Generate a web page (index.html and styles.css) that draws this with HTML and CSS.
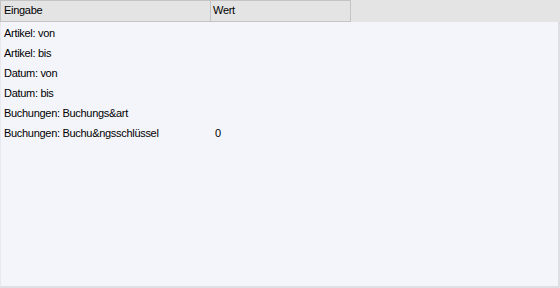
FILE: index.html
```html
<!DOCTYPE html>
<html lang="de">
<head>
  <meta charset="UTF-8">
  <title>Eingaben</title>
  <link rel="stylesheet" href="styles.css">
</head>
<body>
  <div class="grid">
    <div class="head">
      <div class="hcell col1">Eingabe</div>
      <div class="hcell col2">Wert</div>
    </div>
    <div class="rows">
      <div class="row"><span class="col1">Artikel: von</span><span class="col2"></span></div>
      <div class="row"><span class="col1">Artikel: bis</span><span class="col2"></span></div>
      <div class="row"><span class="col1">Datum: von</span><span class="col2"></span></div>
      <div class="row"><span class="col1">Datum: bis</span><span class="col2"></span></div>
      <div class="row"><span class="col1">Buchungen: Buchungs&amp;art</span><span class="col2"></span></div>
      <div class="row"><span class="col1">Buchungen: Buchu&amp;ngsschlüssel</span><span class="col2">0</span></div>
    </div>
  </div>
</body>
</html>
```

FILE: styles.css
```css
body {
  margin: 0;
  padding: 0;
  font-family: "Liberation Sans", Arial, sans-serif;
  font-size: 11px;
  letter-spacing: -0.3px;
  color: #000;
  background: #e4e4e4;
}
.grid {
  width: 560px;
  height: 288px;
  display: flex;
  flex-direction: column;
}
.head {
  display: flex;
  height: 22px;
  background: #e4e4e4;
}
.hcell {
  box-sizing: border-box;
  height: 22px;
  line-height: 19px;
  border: 1px solid #c4c4c4;
  border-left: none;
  padding-left: 3px;
}
.head .col1 {
  width: 211px;
  border-left: 1px solid #c4c4c4;
}
.head .col2 {
  width: 140px;
  padding-left: 2px;
}
.rows {
  flex: 1;
  background: #f4f5fb;
  border-right: 2px solid #dedfe3;
  border-bottom: 2px solid #dedfe3;
  border-left: 1px solid #e8e9ee;
  padding-top: 1px;
}
.row {
  display: flex;
  height: 20px;
  line-height: 20px;
}
.row .col1 {
  width: 210px;
  padding-left: 3px;
  box-sizing: border-box;
}
.row .col2 {
  padding-left: 4px;
}
```
